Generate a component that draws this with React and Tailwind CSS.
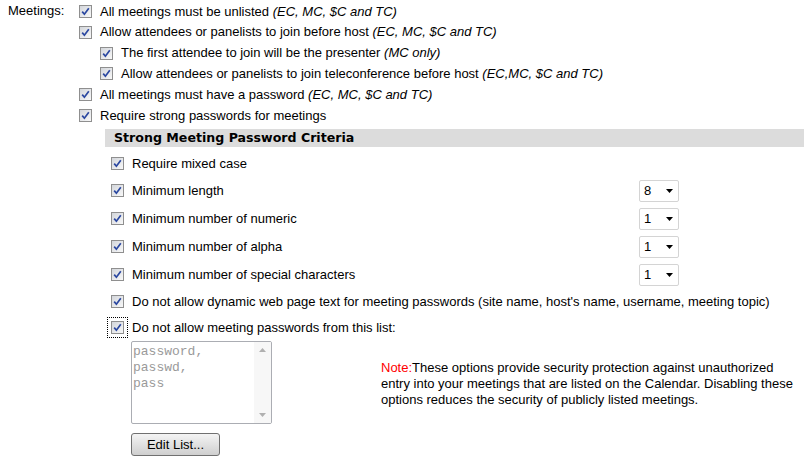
const SELECTS = { "Minimum length": "8", "Minimum number of numeric": "1", "Minimum number of alpha": "1", "Minimum number of special characters": "1" };

function Check({ focus }) {
  return (
    <span
      className={`inline-flex shrink-0 ${focus ? "outline-1 outline-dotted outline-black outline-offset-[3px]" : ""}`}
    >
      <span className="w-[13px] h-[13px] border border-[#8f8f8f] bg-gradient-to-br from-[#d3d6db] to-[#f8f8f8] flex items-center justify-center">
        <svg width="11" height="11" viewBox="0 0 11 11">
          <path d="M2.2 5.6 L4.4 8.2 L8.8 2.2" fill="none" stroke="#2a47a0" strokeWidth="1.7" />
        </svg>
      </span>
    </span>
  );
}

function Sel({ value }) {
  return (
    <div className="w-[40px] h-[22px] border border-[#d4d4d4] rounded-[2px] bg-white flex items-center justify-between pl-[4px] pr-[5px]">
      <span>{value}</span>
      <svg width="7" height="4" viewBox="0 0 7 4">
        <path d="M0 0h7L3.5 4z" fill="#000" />
      </svg>
    </div>
  );
}

function Row({ indent = "", children, focus }) {
  return (
    <div className={`h-[22px] flex items-center gap-[8px] ${indent}`}>
      <Check focus={focus} />
      <span className="whitespace-nowrap">{children}</span>
    </div>
  );
}

export default function App() {
  return (
    <div className="w-[804px] h-[456px] overflow-hidden bg-white text-black text-[13px] font-['Liberation_Sans',Arial,sans-serif] flex">
      <div className="w-[79px] shrink-0 pl-[8px] h-[22px] flex items-center">Meetings:</div>

      <div className="flex-1 flex flex-col pt-px">
        <Row>
          All meetings must be unlisted <i>(EC, MC, $C and TC)</i>
        </Row>
        <Row>
          Allow attendees or panelists to join before host <i>(EC, MC, $C and TC)</i>
        </Row>
        <Row indent="pl-[21px]">
          The first attendee to join will be the presenter <i>(MC only)</i>
        </Row>
        <Row indent="pl-[21px]">
          Allow attendees or panelists to join teleconference before host <i>(EC,MC, $C and TC)</i>
        </Row>
        <Row>
          All meetings must have a password <i>(EC, MC, $C and TC)</i>
        </Row>
        <Row>Require strong passwords for meetings</Row>

        <div className="ml-[26px] mt-[3px] flex flex-col">
          <div className="h-[18px] bg-[#dcdcdc] pl-[9px] flex items-center font-bold font-['DejaVu_Sans',sans-serif] text-[12.6px]">
            Strong Meeting Password Criteria
          </div>

          <div className="pl-[6px] flex flex-col">
            <div className="h-[27px] mt-[3px] flex items-center gap-[8px]">
              <Check />
              <span>Require mixed case</span>
            </div>
            {Object.entries(SELECTS).map(([label, v]) => (
              <div key={label} className="h-[28px] flex items-center gap-[8px]">
                <Check />
                <span className="w-[499px]">{label}</span>
                <Sel value={v} />
              </div>
            ))}
            <div className="h-[26px] flex items-center gap-[8px]">
              <Check />
              <span className="whitespace-nowrap">
                Do not allow dynamic web page text for meeting passwords (site name, host's name, username, meeting topic)
              </span>
            </div>
            <div className="h-[26px] flex items-center gap-[8px]">
              <Check focus />
              <span>Do not allow meeting passwords from this list:</span>
            </div>
          </div>

          <div className="pl-[26px] flex items-center">
            <div className="w-[141px] h-[83px] shrink-0 border border-[#abadb3] rounded-[2px] flex overflow-hidden">
              <div className="flex-1 pl-[1px] pt-[2px] font-['Liberation_Mono',monospace] text-[13px] leading-[16px] text-[#9a9a9a]">
                <div>password,</div>
                <div>passwd,</div>
                <div>pass</div>
              </div>
              <div className="w-[17px] bg-[#f7f7f7] flex flex-col items-center justify-between py-[6px]">
                <svg width="7" height="4" viewBox="0 0 7 4">
                  <path d="M0 4h7L3.5 0z" fill="#b0b0b0" />
                </svg>
                <svg width="7" height="4" viewBox="0 0 7 4">
                  <path d="M0 0h7L3.5 4z" fill="#b0b0b0" />
                </svg>
              </div>
            </div>
            <p className="ml-[109px] mt-[4px] w-[420px] leading-[16px]">
              <span className="text-[#ff0000]">Note:</span>These options provide security protection against unauthorized
              entry into your meetings that are listed on the Calendar. Disabling these options reduces the security of
              publicly listed meetings.
            </p>
          </div>

          <div className="pl-[26px] mt-[9px]">
            <button className="w-[89px] h-[23px] border border-[#707070] rounded-[3px] bg-gradient-to-b from-[#f4f4f4] to-[#cfcfcf] flex items-center justify-center">
              Edit List...
            </button>
          </div>
        </div>
      </div>
    </div>
  );
}
